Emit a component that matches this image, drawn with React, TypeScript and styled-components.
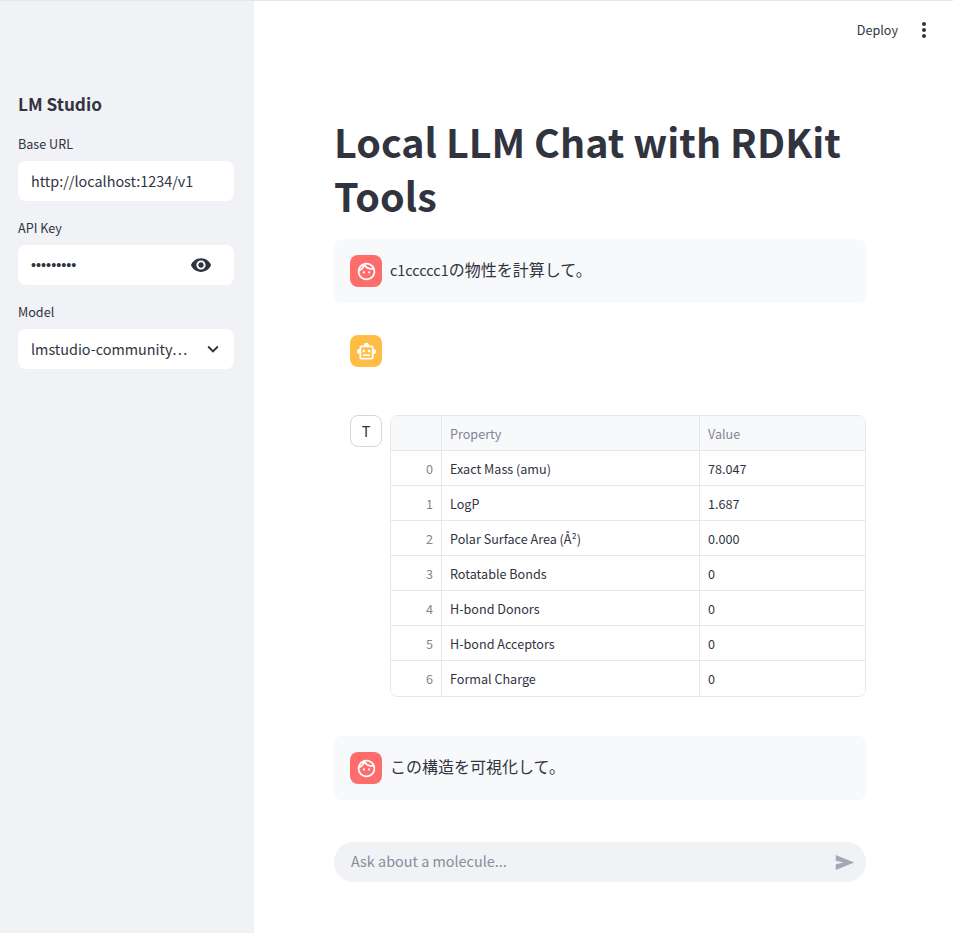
import React from 'react'
import styled, { createGlobalStyle } from 'styled-components';
import { MdOutlineFace, MdOutlineSmartToy, MdVisibility, MdExpandMore, MdMoreVert } from 'react-icons/md';

const GlobalStyle = createGlobalStyle`
html, body {
  margin: 0;
  padding: 0;
  background: #fff;
}
body {
  font-family: "Noto Sans CJK JP", "Noto Sans", sans-serif;
  color: #31333f;
}
* {
  box-sizing: border-box;
}
`;

const Page = styled.div`
display: flex;
height: 933px;
overflow: hidden;
border-top: 1px solid #e6e7ea;
`;

const Sidebar = styled.aside`
width: 254px;
flex-shrink: 0;
background-color: #f0f2f6;
padding: 89px 20px 0 18px;
`;

const SidebarTitle = styled.h3`
margin: 0 0 16px 0;
font-size: 17.2px;
line-height: 28px;
font-weight: 600;
`;

const Field = styled.div`
margin-bottom: 17px;
`;

const Label = styled.div`
font-size: 12.6px;
line-height: 20px;
margin-bottom: 7px;
`;

const InputBox = styled.div`
display: flex;
align-items: center;
justify-content: space-between;
height: 40px;
padding: 0 13px 2px 13px;
background-color: #fff;
border-radius: 8px;
font-size: 14.4px;
white-space: nowrap;
`;

const Dots = styled.span`
font-size: 14.4px;
font-family: "Liberation Sans", sans-serif;
margin-top: 2px;
`;

const EyeIcon = styled(MdVisibility)`
margin: 2px 9px 0 0;
color: #31333f;
`;

const ChevronIcon = styled(MdExpandMore)`
margin: 2px -3px 0 0;
color: #31333f;
`;

const Main = styled.main`
flex: 1;
display: flex;
flex-direction: column;
min-width: 0;
`;

const TopBar = styled.div`
display: flex;
justify-content: flex-end;
align-items: center;
gap: 14px;
height: 58px;
padding: 0 17px 1px 0;
font-size: 12.6px;
`;

const Content = styled.div`
width: 532px;
margin-left: 80px;
display: flex;
flex-direction: column;
`;

const Title = styled.h1`
margin: 55px 0 17px 0;
font-size: 39.45px;
line-height: 54px;
font-weight: 700;
`;

const Message = styled.div<{ $tinted?: boolean }>`
display: flex;
gap: 8px;
padding: 16px;
border-radius: 8px;
background-color: ${({ $tinted }) => ($tinted ? '#f8f9fb' : 'transparent')};
`;

const AssistantMessage = styled(Message)`
margin-top: 16px;
`;

const Avatar = styled.div<{ $color?: string }>`
width: 32px;
height: 32px;
flex-shrink: 0;
display: flex;
align-items: center;
justify-content: center;
border-radius: 8px;
color: #fff;
background-color: ${({ $color }) => $color};
`;

const ToolAvatar = styled.div`
width: 32px;
height: 32px;
flex-shrink: 0;
display: flex;
align-items: center;
justify-content: center;
border-radius: 8px;
background-color: #fff;
border: 1px solid #d5d6da;
font-size: 14.4px;
padding-bottom: 1px;
`;

const MessageText = styled.div`
font-size: 16px;
height: 32px;
line-height: 29px;
`;

const Latin = styled.span`
font-size: 14.4px;
`;

const EmptyRow = styled.div`
height: 32px;
`;

const ToolRow = styled.div`
display: flex;
gap: 8px;
padding: 0 0 0 16px;
margin-top: 32px;
margin-bottom: 39px;
`;

const DataTable = styled.div`
flex: 1;
display: grid;
grid-template-columns: 51px 258px 1fr;
border: 1px solid #e6e7ea;
border-radius: 8px;
overflow: hidden;
font-size: 12.6px;
`;

const Cell = styled.div<{ $head?: boolean; $index?: boolean; $last?: boolean; $end?: boolean }>`
height: 35px;
display: flex;
align-items: center;
padding: 0 8px;
justify-content: ${({ $index }) => ($index ? 'flex-end' : 'flex-start')};
background-color: ${({ $head }) => ($head ? '#f8f9fb' : '#fff')};
color: ${({ $head, $index }) => ($head || $index ? '#808495' : '#31333f')};
border-bottom: ${({ $last }) => ($last ? 'none' : '1px solid #e6e7ea')};
border-right: ${({ $end }) => ($end ? 'none' : '1px solid #e6e7ea')};
`;

const ChatInput = styled.div`
display: flex;
align-items: center;
justify-content: space-between;
height: 40px;
margin-top: 42px;
padding: 0 11px 3px 17px;
border-radius: 20px;
background-color: #f0f2f6;
font-size: 14.4px;
color: #8a8c99;
`;

const SendIcon = styled.svg`
width: 21px;
height: 21px;
margin-top: 3px;
fill: #a3a8b8;
`;

const rows = [
  ['Exact Mass (amu)', '78.047'],
  ['LogP', '1.687'],
  ['Polar Surface Area (Å²)', '0.000'],
  ['Rotatable Bonds', '0'],
  ['H-bond Donors', '0'],
  ['H-bond Acceptors', '0'],
  ['Formal Charge', '0'],
];

function App() {
  return (
    <Page>
      <GlobalStyle />
      <Sidebar>
        <SidebarTitle>LM Studio</SidebarTitle>
        <Field>
          <Label>Base URL</Label>
          <InputBox>http://localhost:1234/v1</InputBox>
        </Field>
        <Field>
          <Label>API Key</Label>
          <InputBox>
            <Dots>•••••••••</Dots>
            <EyeIcon size={22} />
          </InputBox>
        </Field>
        <Field>
          <Label>Model</Label>
          <InputBox>
            lmstudio-community…
            <ChevronIcon size={22} />
          </InputBox>
        </Field>
      </Sidebar>
      <Main>
        <TopBar>
          Deploy
          <MdMoreVert size={24} color="#31333f" />
        </TopBar>
        <Content>
          <Title>Local LLM Chat with RDKit Tools</Title>
          <Message $tinted>
            <Avatar $color="#ff6c6c"><MdOutlineFace size={21} /></Avatar>
            <MessageText><Latin>c1ccccc1</Latin>の物性を計算して。</MessageText>
          </Message>
          <AssistantMessage>
            <Avatar $color="#ffbd45"><MdOutlineSmartToy size={21} /></Avatar>
            <EmptyRow />
          </AssistantMessage>
          <ToolRow>
            <ToolAvatar>T</ToolAvatar>
            <DataTable>
              <Cell $head $index />
              <Cell $head>Property</Cell>
              <Cell $head $end>Value</Cell>
              {rows.map((row, i) => (
                <React.Fragment key={row[0]}>
                  <Cell $index $last={i === rows.length - 1}>{i}</Cell>
                  <Cell $last={i === rows.length - 1}>{row[0]}</Cell>
                  <Cell $end $last={i === rows.length - 1}>{row[1]}</Cell>
                </React.Fragment>
              ))}
            </DataTable>
          </ToolRow>
          <Message $tinted>
            <Avatar $color="#ff6c6c"><MdOutlineFace size={21} /></Avatar>
            <MessageText>この構造を可視化して。</MessageText>
          </Message>
          <ChatInput>
            Ask about a molecule...
            <SendIcon viewBox="0 0 24 24"><path d="M2 3.5 23 12 2 20.5V14l9-2-9-2z" /></SendIcon>
          </ChatInput>
        </Content>
      </Main>
    </Page>
  )
}

export default App
